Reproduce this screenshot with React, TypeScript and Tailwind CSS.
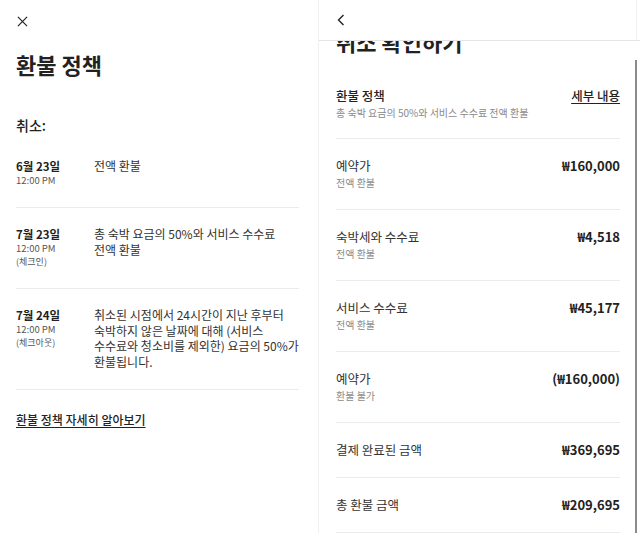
import React from 'react';

const font = { fontFamily: '"Noto Sans CJK KR", "Noto Sans", sans-serif' };

interface PolicyRow {
  date: string;
  time: string;
  note?: string;
  text: string[];
}

const policyRows: PolicyRow[] = [
  { date: '6월 23일', time: '12:00 PM', text: ['전액 환불'] },
  { date: '7월 23일', time: '12:00 PM', note: '(체크인)', text: ['총 숙박 요금의 50%와 서비스 수수료', '전액 환불'] },
  {
    date: '7월 24일',
    time: '12:00 PM',
    note: '(체크아웃)',
    text: ['취소된 시점에서 24시간이 지난 후부터', '숙박하지 않은 날짜에 대해 (서비스', '수수료와 청소비를 제외한) 요금의 50%가', '환불됩니다.'],
  },
];

interface AmountRow {
  label: string;
  sub?: string;
  amount: string;
}

const amountRows: AmountRow[] = [
  { label: '예약가', sub: '전액 환불', amount: '₩160,000' },
  { label: '숙박세와 수수료', sub: '전액 환불', amount: '₩4,518' },
  { label: '서비스 수수료', sub: '전액 환불', amount: '₩45,177' },
  { label: '예약가', sub: '환불 불가', amount: '(₩160,000)' },
  { label: '결제 완료된 금액', amount: '₩369,695' },
  { label: '총 환불 금액', amount: '₩209,695' },
];

const RefundPolicy: React.FC = () => (
  <div className="w-[319px] shrink-0 border-r border-[#f0f0f0] pl-4 pr-[19px] text-[#222222]">
    <div className="h-[42px] flex items-center">
      <svg width="11" height="11" viewBox="0 0 12 12" className="ml-[1px]">
        <path d="M1 1 L11 11 M11 1 L1 11" stroke="#222" strokeWidth="1.3" fill="none" />
      </svg>
    </div>
    <h1 className="mt-[7px] text-[22px] leading-[30px] font-bold">환불 정책</h1>
    <div className="mt-[36px] text-[14px] leading-[20px] font-medium">취소:</div>
    <div className="mt-[5px]">
      {policyRows.map((row, idx) => (
        <div key={idx} className="flex pt-[18px] pb-[20px] border-b border-[#ebebeb]">
          <div className="w-[78px] shrink-0">
            <div className="text-[11.5px] leading-[16px] font-semibold">{row.date}</div>
            <div className="text-[9.5px] leading-[13px] text-[#555]">{row.time}</div>
            {row.note && <div className="text-[9px] leading-[13px] text-[#555]">{row.note}</div>}
          </div>
          <div className="text-[12px] leading-[15.5px] text-[#333] whitespace-nowrap">
            {row.text.map((t, i) => (
              <div key={i}>{t}</div>
            ))}
          </div>
        </div>
      ))}
    </div>
    <div className="mt-[21px] text-[12px] leading-[18px] font-medium underline underline-offset-2">
      환불 정책 자세히 알아보기
    </div>
  </div>
);

const CancelConfirm: React.FC = () => (
  <div className="flex-1 flex flex-col min-w-0 text-[#222222]">
    <div className="h-[41px] shrink-0 flex items-center border-b border-[#e4e4e4] pl-[18px]">
      <div className="h-full flex-1 flex items-center border-r border-[#f0f0f0]">
        <svg width="8" height="12" viewBox="0 0 8 12">
          <path d="M6.5 1 L1.5 6 L6.5 11" stroke="#222" strokeWidth="1.4" fill="none" />
        </svg>
      </div>
      <div className="w-[3px]" />
    </div>
    <div className="flex-1 flex min-h-0">
      <div className="flex-1 overflow-hidden pl-[17px] pr-[15px]">
        <div className="-mt-[16px] text-[22px] leading-[32px] font-bold">취소 확인하기</div>
        <div className="mt-[12px] flex justify-between pt-[18px] pb-[17px] border-b border-[#ebebeb]">
          <div>
            <div className="text-[12.5px] leading-[18px] font-medium">환불 정책</div>
            <div className="text-[10px] leading-[16px] text-[#8a8a8a]">총 숙박 요금의 50%와 서비스 수수료 전액 환불</div>
          </div>
          <div className="text-[12.5px] leading-[18px] font-medium underline underline-offset-2">세부 내용</div>
        </div>
        {amountRows.map((row, idx) => (
          <div key={idx} className="flex justify-between py-[18px] border-b border-[#ebebeb]">
            <div>
              <div className="text-[12.5px] leading-[18px] text-[#333]">{row.label}</div>
              {row.sub && <div className="text-[10px] leading-[16px] text-[#8a8a8a]">{row.sub}</div>}
            </div>
            <div className="text-[13px] leading-[18px] font-bold">{row.amount}</div>
          </div>
        ))}
      </div>
      <div className="w-[2px] mt-[19px] bg-[#8c8c8c]" />
      <div className="w-[3px]" />
    </div>
  </div>
);

export default function App() {
  return (
    <div className="w-[640px] h-[533px] overflow-hidden bg-white flex" style={font}>
      <RefundPolicy />
      <CancelConfirm />
    </div>
  );
}
